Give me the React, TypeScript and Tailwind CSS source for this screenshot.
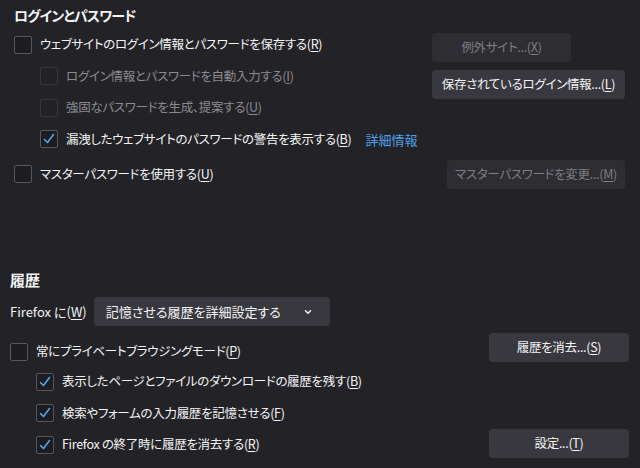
import React from "react";

const font = "font-['Segoe_UI','Noto_Sans_CJK_JP',sans-serif] [font-feature-settings:'palt']";

function Check({ checked = false, disabled = false }: { checked?: boolean; disabled?: boolean }) {
  return (
    <span
      className={`flex h-[18px] w-[18px] shrink-0 items-center justify-center rounded-[2px] border ${
        disabled ? "border-[#36363b] bg-[#222226]" : "border-[#56565c] bg-[#1c1c21]"
      }`}
    >
      {checked && (
        <svg width="14" height="14" viewBox="0 0 14 14" fill="none">
          <path d="M2.5 7.5 L5.5 10.5 L11.5 2.5" stroke="#4ea6e6" strokeWidth="1.6" strokeLinecap="round" strokeLinejoin="round" />
        </svg>
      )}
    </span>
  );
}

function Label({ text, k, disabled = false }: { text: string; k: string; disabled?: boolean }) {
  return (
    <span className={`whitespace-nowrap text-[12.5px] tracking-[-0.3px] ${disabled ? "text-[#8a8a8f]" : "text-[#f4f4f6]"}`}>
      {text}(<span className="underline underline-offset-2">{k}</span>)
    </span>
  );
}

function Row({
  text,
  k,
  checked,
  disabled,
  indent,
  h = "h-[31.5px]",
  extra,
}: {
  text: string;
  k: string;
  checked?: boolean;
  disabled?: boolean;
  indent?: boolean;
  h?: string;
  extra?: React.ReactNode;
}) {
  return (
    <div className={`flex items-center gap-[8px] ${h} ${indent ? "pl-[26px]" : ""}`}>
      <Check checked={checked} disabled={disabled} />
      <Label text={text} k={k} disabled={disabled} />
      {extra}
    </div>
  );
}

function Btn({ text, k, disabled = false, w }: { text: string; k: string; disabled?: boolean; w: string }) {
  return (
    <div
      className={`flex h-[29px] ${w} items-center justify-center rounded-[4px] text-[12.5px] tracking-[-0.3px] ${
        disabled ? "bg-[#2d2d32] text-[#7e7e84]" : "bg-[#38383e] text-[#f4f4f6]"
      }`}
    >
      <span className="whitespace-nowrap">
        {text}(<span className="underline underline-offset-2">{k}</span>)
      </span>
    </div>
  );
}

export default function App() {
  return (
    <div className={`h-[468px] w-[640px] overflow-hidden bg-[#232327] ${font}`}>
      {/* Login section */}
      <div className="pl-[14px] pr-[15px] pt-[4px]">
        <div className="h-[22px] text-[14px] font-bold leading-[22px] tracking-[-0.9px] text-[#f4f4f6]">ログインとパスワード</div>
        <div className="mt-[3px] flex">
          <div className="flex shrink-0 flex-col">
            <Row text="ウェブサイトのログイン情報とパスワードを保存する" k="R" />
            <Row text="ログイン情報とパスワードを自動入力する" k="I" disabled indent />
            <Row text="強固なパスワードを生成、提案する" k="U" disabled indent />
            <Row
              text="漏洩したウェブサイトのパスワードの警告を表示する"
              k="B"
              checked
              indent
              extra={<span className="ml-[6px] whitespace-nowrap text-[13px] text-[#4f9fe8]">詳細情報</span>}
            />
          </div>
          <div className="ml-auto flex w-[193px] shrink-0 flex-col items-start gap-[8px] pt-[4px]">
            <Btn text="例外サイト..." k="X" disabled w="w-[139px]" />
            <Btn text="保存されているログイン情報..." k="L" w="w-[193px]" />
          </div>
        </div>
        <div className="mt-[4px] flex h-[30px] items-center">
          <div className="flex items-center gap-[8px]">
            <Check />
            <Label text="マスターパスワードを使用する" k="U" />
          </div>
          <div className="ml-auto">
            <Btn text="マスターパスワードを変更..." k="M" disabled w="w-[178px]" />
          </div>
        </div>
      </div>

      {/* History section */}
      <div className="mt-[80px] pl-[10px] pr-[11px]">
        <div className="h-[22px] text-[15px] font-bold leading-[22px] text-[#f4f4f6]">履歴</div>
        <div className="mt-[6px] flex h-[29px] items-center gap-[7px]">
          <span className="whitespace-nowrap text-[13px] text-[#f4f4f6]">
            Firefox に(<span className="underline underline-offset-2">W</span>)
          </span>
          <div className="flex h-[29px] w-[236px] items-center justify-between rounded-[4px] bg-[#38383e] pl-[12px] pr-[17px] text-[13px] text-[#f4f4f6]">
            <span className="whitespace-nowrap">記憶させる履歴を詳細設定する</span>
            <svg width="10" height="10" viewBox="0 0 10 10" fill="none">
              <path d="M2.5 3.8 L5 6.2 L7.5 3.8" stroke="#f4f4f6" strokeWidth="1.5" strokeLinecap="round" strokeLinejoin="round" />
            </svg>
          </div>
        </div>
        <div className="mt-[7px] flex">
          <div className="flex flex-col">
            <div className="flex h-[33px] items-center gap-[8px] pt-[4px]">
              <Check />
              <Label text="常にプライベートブラウジングモード" k="P" />
            </div>
            <Row text="表示したページとファイルのダウンロードの履歴を残す" k="B" checked indent />
            <Row text="検索やフォームの入力履歴を記憶させる" k="F" checked indent />
            <Row text="Firefox の終了時に履歴を消去する" k="R" checked indent />
          </div>
          <div className="ml-auto flex flex-col justify-between pb-[3px]">
            <Btn text="履歴を消去..." k="S" w="w-[140px]" />
            <Btn text="設定..." k="T" w="w-[140px]" />
          </div>
        </div>
      </div>
    </div>
  );
}
